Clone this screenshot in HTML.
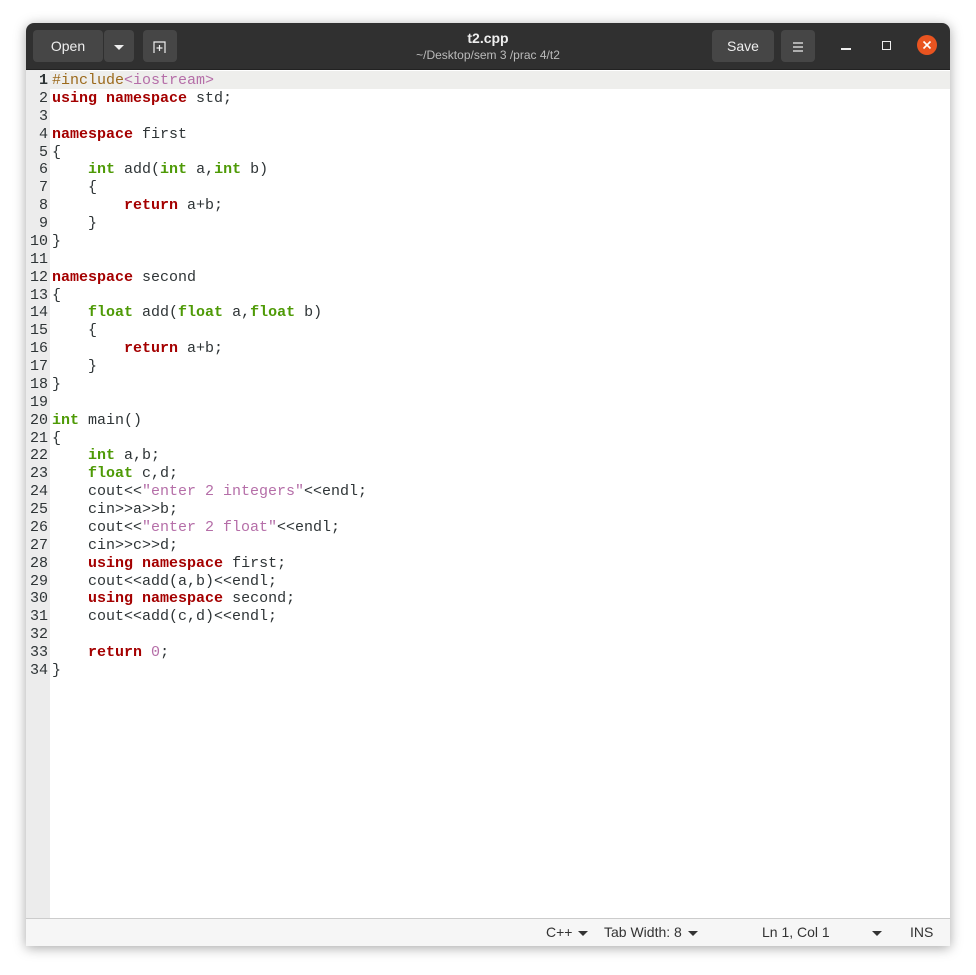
<!DOCTYPE html>
<html><head><meta charset="utf-8"><style>
body{margin:0;width:976px;height:975px;background:#fff;position:relative;overflow:hidden;font-family:"Liberation Sans",sans-serif}
.win{position:absolute;left:26px;top:23px;width:924px;height:923px;background:#fff;box-shadow:0 2px 12px rgba(0,0,0,.35);border-radius:8px 8px 0 0;overflow:hidden}
.hdr{position:absolute;left:0;top:0;width:924px;height:46px;background:#303030;border-bottom:1px solid #222}
.btn{position:absolute;top:7px;height:32px;background:#464646;border-radius:4px;color:#eee;font-size:14px;line-height:32px;text-align:center}
.title{position:absolute;left:0;width:924px;text-align:center;color:#eee}
.gut{position:absolute;left:0;top:47px;width:24px;height:848px;background:#ececec}
.code{position:absolute;left:0;top:49px;width:924px;font-family:"Liberation Mono",monospace;font-size:15px;line-height:17.88px;white-space:pre;color:#2e3436}
.ln{display:inline-block;width:22px;text-align:right;color:#2e3436;margin-right:4px}
.k{color:#a40000;font-weight:bold}.t{color:#4e9a06;font-weight:bold}.p{color:#9c6a1c}.s{color:#b56ea8}
.cur{position:absolute;left:24px;top:48px;width:900px;height:18px;background:#eeeeec}
.sb{position:absolute;left:0;top:895px;width:924px;height:28px;background:#f6f6f6;border-top:1px solid #ccc;font-size:14px;color:#333;line-height:27px}
.sb span{position:absolute}
.tri{display:inline-block;width:0;height:0;border-left:5px solid transparent;border-right:5px solid transparent;border-top:5px solid #333;vertical-align:middle;margin-left:6px}
</style></head><body>
<div class="win">
<div class="hdr">
<div class="btn" style="left:7px;width:70px">Open</div>
<div class="btn" style="left:78px;width:30px"><span class="tri" style="border-top-color:#eee;margin:0"></span></div>
<div class="btn" style="left:117px;width:34px"><svg width="16" height="14" viewBox="0 0 16 14" style="vertical-align:middle"><path d="M2 13V2h11v11" fill="none" stroke="#eee" stroke-width="1.2"/><path d="M7.5 5v6M4.5 8h6" stroke="#eee" stroke-width="1.2"/></svg></div>
<div class="title" style="top:7px;font-size:14px;font-weight:bold">t2.cpp</div>
<div class="title" style="top:25px;font-size:12px;color:#bbb">~/Desktop/sem 3 /prac 4/t2</div>
<div class="btn" style="left:686px;width:62px">Save</div>
<div class="btn" style="left:755px;width:34px"><svg width="14" height="12" style="vertical-align:middle"><path d="M2 2h10M2 6h10M2 10h10" stroke="#eee" stroke-width="1.2"/></svg></div>
<div style="position:absolute;left:815px;top:25px;width:10px;height:1.5px;background:#eee"></div>
<div style="position:absolute;left:856px;top:18px;width:7px;height:7px;border:1.3px solid #eee"></div>
<div style="position:absolute;left:891px;top:12px;width:20px;height:20px;border-radius:50%;background:#e95420"><svg width="20" height="20"><path d="M6.5 6.5l7 7M13.5 6.5l-7 7" stroke="#fff" stroke-width="1.6"/></svg></div>
</div>
<div class="gut"></div>
<div class="cur"></div>
<div class="code"><span class="ln" style="font-weight:bold">1</span><span class="p">#include</span><span class="s">&lt;iostream&gt;</span>
<span class="ln">2</span><span class="k">using</span> <span class="k">namespace</span> std;
<span class="ln">3</span>
<span class="ln">4</span><span class="k">namespace</span> first
<span class="ln">5</span>{
<span class="ln">6</span>    <span class="t">int</span> add(<span class="t">int</span> a,<span class="t">int</span> b)
<span class="ln">7</span>    {
<span class="ln">8</span>        <span class="k">return</span> a+b;
<span class="ln">9</span>    }
<span class="ln">10</span>}
<span class="ln">11</span>
<span class="ln">12</span><span class="k">namespace</span> second
<span class="ln">13</span>{
<span class="ln">14</span>    <span class="t">float</span> add(<span class="t">float</span> a,<span class="t">float</span> b)
<span class="ln">15</span>    {
<span class="ln">16</span>        <span class="k">return</span> a+b;
<span class="ln">17</span>    }
<span class="ln">18</span>}
<span class="ln">19</span>
<span class="ln">20</span><span class="t">int</span> main()
<span class="ln">21</span>{
<span class="ln">22</span>    <span class="t">int</span> a,b;
<span class="ln">23</span>    <span class="t">float</span> c,d;
<span class="ln">24</span>    cout&lt;&lt;<span class="s">"enter 2 integers"</span>&lt;&lt;endl;
<span class="ln">25</span>    cin&gt;&gt;a&gt;&gt;b;
<span class="ln">26</span>    cout&lt;&lt;<span class="s">"enter 2 float"</span>&lt;&lt;endl;
<span class="ln">27</span>    cin&gt;&gt;c&gt;&gt;d;
<span class="ln">28</span>    <span class="k">using</span> <span class="k">namespace</span> first;
<span class="ln">29</span>    cout&lt;&lt;add(a,b)&lt;&lt;endl;
<span class="ln">30</span>    <span class="k">using</span> <span class="k">namespace</span> second;
<span class="ln">31</span>    cout&lt;&lt;add(c,d)&lt;&lt;endl;
<span class="ln">32</span>
<span class="ln">33</span>    <span class="k">return</span> <span class="s">0</span>;
<span class="ln">34</span>}</div>
<div class="sb">
<span style="left:520px">C++<i class="tri"></i></span>
<span style="left:578px">Tab Width: 8<i class="tri"></i></span>
<span style="left:736px">Ln 1, Col 1</span>
<span style="left:840px"><i class="tri"></i></span>
<span style="left:884px">INS</span>
</div>
</div>
</body></html>
